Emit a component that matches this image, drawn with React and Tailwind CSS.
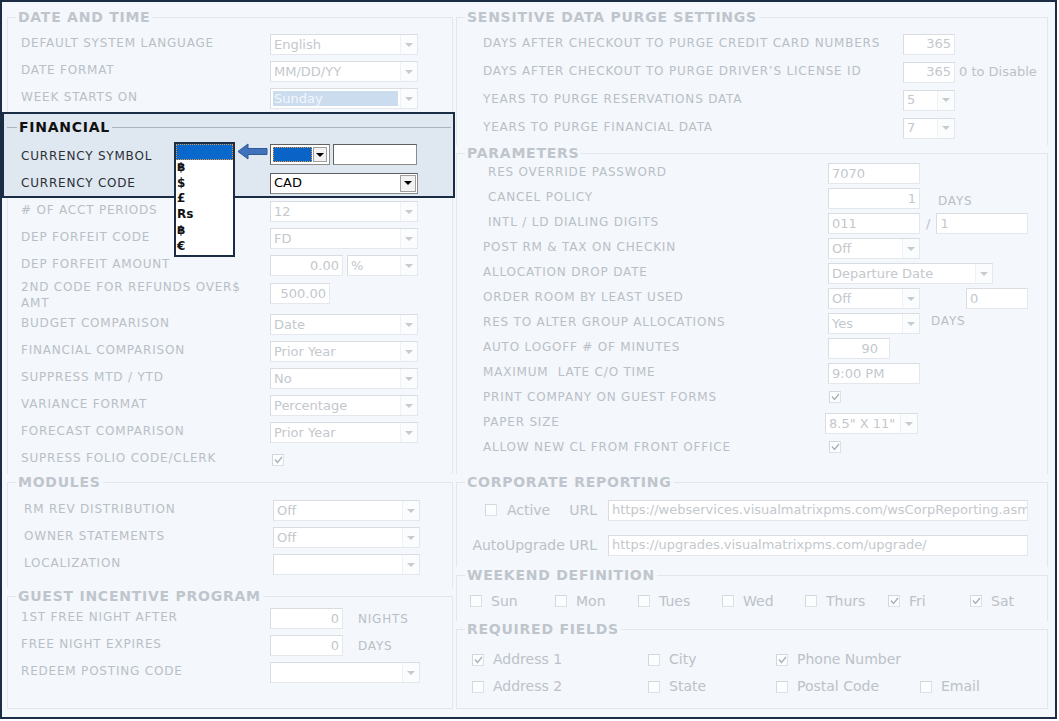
import React from "react";

const LABEL = "text-[12px] tracking-[0.8px] text-[#b9bfc7] whitespace-nowrap";
const DARK_LABEL = "text-[12px] tracking-[0.8px] text-[#2b2f36] whitespace-nowrap";
const FAINT = "text-[#bcc2c9]";

function Tri({ dark }) {
  return (
    <span
      className={`w-0 h-0 border-x-[4px] border-x-transparent border-t-[4px] ${
        dark ? "border-t-black" : "border-t-[#c6cbd0]"
      }`}
    />
  );
}

function Select({ value = "", w = "w-[148px]", hl }) {
  return (
    <div className={`${w} h-[21px] flex bg-white border border-[#e4e7eb] border-t-[#d9dde2] border-l-[#d9dde2]`}>
      <div className="flex-1 min-w-0 flex p-[2px]">
        <span
          className={`w-full flex items-center px-[1px] text-[13px] overflow-hidden whitespace-nowrap ${
            hl ? "bg-[#cbdcef] text-[#f3f7fb]" : "text-[#c3c8cd]"
          }`}
        >
          {value}
        </span>
      </div>
      <div className="w-[17px] flex items-center justify-center bg-[#fbfcfd] border-l border-[#eff1f3]">
        <Tri />
      </div>
    </div>
  );
}

function Input({ value = "", w = "w-[92px]", right, extra = "" }) {
  return (
    <div
      className={`${w} h-[21px] bg-white border border-[#e4e7eb] border-t-[#d9dde2] border-l-[#d9dde2] flex items-center px-[3px] text-[13px] text-[#c3c8cd] overflow-hidden whitespace-nowrap ${
        right ? "justify-end" : ""
      } ${extra}`}
    >
      {value}
    </div>
  );
}

function Check({ on }) {
  return (
    <span className="w-[12px] h-[12px] border border-[#dde1e6] border-t-[#d3d8dd] border-l-[#d3d8dd] bg-[#fcfdfe] flex items-center justify-center shrink-0">
      {on && (
        <svg width="9" height="8" viewBox="0 0 9 8">
          <path d="M1 3.5 L3.5 6.5 L8 1" stroke="#a9afb6" strokeWidth="1.3" fill="none" />
        </svg>
      )}
    </span>
  );
}

function CheckItem({ on, label }) {
  return (
    <div className="flex items-center gap-[9px]">
      <Check on={on} />
      <span className={`text-[14px] ${FAINT} whitespace-nowrap`}>{label}</span>
    </div>
  );
}

// padding goes on the inner wrapper so the legend keeps its place on the line
function Fieldset({ title, className = "", inner = "", children }) {
  return (
    <fieldset className={`border border-[#e2e7ed] ${className}`}>
      <legend className="ml-[8px] px-[2px] text-[14px] leading-[16px] tracking-[0.75px] font-bold text-[#bfc5cc] whitespace-nowrap">
        {title}
      </legend>
      <div className={inner}>{children}</div>
    </fieldset>
  );
}

// left column row: label col 249px wide
function LRow({ label, children, h = "h-[27px]", dark, lab = "pb-[4px]" }) {
  return (
    <div className={`${h} grid grid-cols-[249px_1fr] items-center`}>
      <span className={`${dark ? DARK_LABEL : LABEL} ${lab}`}>{label}</span>
      <div className="flex items-center">{children}</div>
    </div>
  );
}

function RRow({ label, children, cols, h, indent }) {
  return (
    <div className={`${h} grid ${cols} items-center`}>
      <span className={`${LABEL} whitespace-pre pb-[3px] ${indent ? "pl-[5px]" : ""}`}>{label}</span>
      <div className="flex items-center">{children}</div>
    </div>
  );
}

function LeftColumn() {
  return (
    <div className="w-[453px] shrink-0 pl-[5px] pt-[7px] flex flex-col">
      {/* DATE AND TIME */}
      <Fieldset title="DATE AND TIME" className="w-[446px] border-b-0" inner="pl-[13px] pt-[6px]">
        <LRow label="DEFAULT SYSTEM LANGUAGE">
          <Select value="English" />
        </LRow>
        <LRow label="DATE FORMAT">
          <Select value="MM/DD/YY" />
        </LRow>
        <LRow label="WEEK STARTS ON">
          <Select value="Sunday" hl />
        </LRow>
      </Fieldset>

      {/* FINANCIAL highlight */}
      <div className="-ml-[5px] w-[453px] h-[86px] border-2 border-[#1b2d45] bg-[#dfe7f0] flex flex-col">
        <div className="h-[27px] flex items-center">
          <span className="w-[10px] h-px bg-[#aab4c0] ml-[3px]" />
          <span className="px-[2px] text-[14px] tracking-[0.75px] font-bold text-[#111]">FINANCIAL</span>
          <span className="flex-1 h-px bg-[#aab4c0] mr-[2px]" />
        </div>
        <div className="pl-[17px]">
          <LRow label="CURRENCY SYMBOL" dark lab="pt-[3px]">
            <div className="flex items-center gap-[3px]">
              <div className="w-[60px] h-[21px] flex bg-white border border-[#8c8c8c] border-t-[#5f5f5f] border-l-[#5f5f5f] p-[2px] gap-[1px]">
                <div className="flex-1 bg-[#0a64c8] border border-dotted border-[#e0953f]" />
                <div className="w-[14px] flex items-center justify-center border border-[#a0a0a0] bg-[#f2f2f2]">
                  <Tri dark />
                </div>
              </div>
              <div className="w-[84px] h-[21px] bg-white border border-[#8c8c8c] border-t-[#5f5f5f] border-l-[#5f5f5f]" />
            </div>
          </LRow>
          <LRow label="CURRENCY CODE" dark h="h-[28px]" lab="pt-[1px]">
            <div className="w-[148px] h-[21px] mt-[2px] flex bg-white border border-[#8c8c8c] border-t-[#5f5f5f] border-l-[#5f5f5f]">
              <span className="flex-1 flex items-center px-[3px] text-[13px] text-black">CAD</span>
              <div className="w-[16px] m-[1px] flex items-center justify-center border border-[#a0a0a0] bg-[#f2f2f2]">
                <Tri dark />
              </div>
            </div>
          </LRow>
        </div>
      </div>

      {/* rest of FINANCIAL */}
      <div className="w-[446px] h-[276px] border-x border-[#e2e7ed] pl-[13px]">
        <LRow label="# OF ACCT PERIODS">
          <Select value="12" />
        </LRow>
        <LRow label="DEP FORFEIT CODE">
          <Select value="FD" />
        </LRow>
        <LRow label="DEP FORFEIT AMOUNT">
          <div className="flex gap-[4px]">
            <Input value="0.00" w="w-[73px]" right />
            <Select value="%" w="w-[71px]" />
          </div>
        </LRow>
        <div className="h-[32px] grid grid-cols-[249px_1fr] items-start">
          <span className={`${LABEL} leading-[16px]`}>
            2ND CODE FOR REFUNDS OVER$
            <br />
            AMT
          </span>
          <div className="pt-[4px]">
            <Input value="500.00" w="w-[60px]" right />
          </div>
        </div>
        <LRow label="BUDGET COMPARISON">
          <Select value="Date" />
        </LRow>
        <LRow label="FINANCIAL COMPARISON">
          <Select value="Prior Year" />
        </LRow>
        <LRow label="SUPPRESS MTD / YTD">
          <Select value="No" />
        </LRow>
        <LRow label="VARIANCE FORMAT">
          <Select value="Percentage" />
        </LRow>
        <LRow label="FORECAST COMPARISON">
          <Select value="Prior Year" />
        </LRow>
        <LRow label="SUPRESS FOLIO CODE/CLERK">
          <span className="ml-[2px]">
            <Check on />
          </span>
        </LRow>
      </div>

      {/* MODULES */}
      <Fieldset title="MODULES" className="w-[446px] border-b-0" inner="pl-[16px] pt-[7px] pb-[10px]">
        <LRow label="RM REV DISTRIBUTION">
          <Select value="Off" w="w-[147px]" />
        </LRow>
        <LRow label="OWNER STATEMENTS">
          <Select value="Off" w="w-[147px]" />
        </LRow>
        <LRow label="LOCALIZATION">
          <Select value="" w="w-[147px]" />
        </LRow>
      </Fieldset>

      {/* GUEST INCENTIVE PROGRAM */}
      <Fieldset title="GUEST INCENTIVE PROGRAM" className="w-[446px]" inner="pl-[13px] pt-[1px] pb-[22px]">
        <LRow label="1ST FREE NIGHT AFTER">
          <Input value="0" w="w-[73px]" right />
          <span className={`ml-[15px] ${LABEL}`}>NIGHTS</span>
        </LRow>
        <LRow label="FREE NIGHT EXPIRES">
          <Input value="0" w="w-[73px]" right />
          <span className={`ml-[15px] ${LABEL}`}>DAYS</span>
        </LRow>
        <LRow label="REDEEM POSTING CODE">
          <Select value="" w="w-[150px]" />
        </LRow>
      </Fieldset>
    </div>
  );
}

function RightColumn() {
  const s1 = "grid-cols-[420px_1fr]";
  const p = "grid-cols-[345px_1fr]";
  return (
    <div className="flex-1 pl-[1px] pt-[7px] flex flex-col">
      <Fieldset title="SENSITIVE DATA PURGE SETTINGS" className="w-[592px] border-b-0" inner="pl-[26px] pt-[5px] pb-[3px]">
        <RRow label="DAYS AFTER CHECKOUT TO PURGE CREDIT CARD NUMBERS" cols={s1} h="h-[28px]">
          <Input value="365" w="w-[52px]" right />
        </RRow>
        <RRow label="DAYS AFTER CHECKOUT TO PURGE DRIVER’S LICENSE ID" cols={s1} h="h-[28px]">
          <Input value="365" w="w-[52px]" right />
          <span className={`ml-[4px] text-[13px] ${FAINT} whitespace-nowrap`}>0 to Disable</span>
        </RRow>
        <RRow label="YEARS TO PURGE RESERVATIONS DATA" cols={s1} h="h-[28px]">
          <Select value="5" w="w-[52px]" />
        </RRow>
        <RRow label="YEARS TO PURGE FINANCIAL DATA" cols={s1} h="h-[28px]">
          <Select value="7" w="w-[52px]" />
        </RRow>
      </Fieldset>

      <Fieldset title="PARAMETERS" className="w-[592px] border-b-0" inner="pl-[26px] pb-[13px]">
        <RRow label="RES OVERRIDE PASSWORD" cols={p} h="h-[25px]" indent>
          <Input value="7070" />
        </RRow>
        <RRow label="CANCEL POLICY" cols={p} h="h-[25px]" indent>
          <Input value="1" right />
          <span className={`ml-[18px] ${LABEL} pt-[4px]`}>DAYS</span>
        </RRow>
        <RRow label="INTL / LD DIALING DIGITS" cols={p} h="h-[25px]" indent>
          <Input value="011" />
          <span className={`mx-[6px] text-[13px] ${FAINT}`}>/</span>
          <Input value="1" />
        </RRow>
        <RRow label="POST RM & TAX ON CHECKIN" cols={p} h="h-[25px]">
          <Select value="Off" w="w-[92px]" />
        </RRow>
        <RRow label="ALLOCATION DROP DATE" cols={p} h="h-[25px]">
          <Select value="Departure Date" w="w-[165px]" />
        </RRow>
        <RRow label="ORDER ROOM BY LEAST USED" cols={p} h="h-[25px]">
          <Select value="Off" w="w-[92px]" />
          <Input value="0" w="w-[62px]" extra="ml-[46px]" />
        </RRow>
        <RRow label="RES TO ALTER GROUP ALLOCATIONS" cols={p} h="h-[25px]">
          <Select value="Yes" w="w-[92px]" />
          <span className={`ml-[11px] ${LABEL} pb-[6px]`}>DAYS</span>
        </RRow>
        <RRow label="AUTO LOGOFF # OF MINUTES" cols={p} h="h-[25px]">
          <Input value="90" w="w-[62px]" right extra="pr-[11px]" />
        </RRow>
        <RRow label="MAXIMUM  LATE C/O TIME" cols={p} h="h-[25px]">
          <Input value="9:00 PM" />
        </RRow>
        <RRow label="PRINT COMPANY ON GUEST FORMS" cols={p} h="h-[25px]">
          <span className="ml-[1px] pb-[3px]">
            <Check on />
          </span>
        </RRow>
        <RRow label="PAPER SIZE" cols={p} h="h-[25px]">
          <div className="-ml-[3px]">
            <Select value={'8.5" X 11"'} w="w-[93px]" />
          </div>
        </RRow>
        <RRow label="ALLOW NEW CL FROM FRONT OFFICE" cols={p} h="h-[25px]">
          <span className="ml-[1px] pb-[3px]">
            <Check on />
          </span>
        </RRow>
      </Fieldset>

      <Fieldset title="CORPORATE REPORTING" className="w-[592px] border-b-0" inner="pl-[2px] pt-[7px] pb-[9px]">
        <div className="h-[26px] flex items-center">
          <div className="w-[149px] pr-[11px] flex items-center justify-end">
            <Check />
            <span className={`ml-[10px] text-[14px] ${FAINT}`}>Active</span>
            <span className={`ml-[19px] text-[14px] ${FAINT}`}>URL</span>
          </div>
          <Input value="https://webservices.visualmatrixpms.com/wsCorpReporting.asmx" w="w-[420px]" />
        </div>
        <div className="h-[26px] mt-[9px] flex items-center">
          <div className="w-[149px] pr-[11px] flex items-center justify-end">
            <span className={`text-[14px] ${FAINT} whitespace-nowrap`}>AutoUpgrade URL</span>
          </div>
          <Input value="https://upgrades.visualmatrixpms.com/upgrade/" w="w-[420px]" />
        </div>
      </Fieldset>

      <Fieldset title="WEEKEND DEFINITION" className="w-[592px] border-b-0" inner="pl-[13px] pt-[6px] pb-[8px]">
        <div className="h-[24px] grid grid-cols-[85px_83px_84px_83px_83px_82px_1fr] items-center">
          <CheckItem label="Sun" />
          <CheckItem label="Mon" />
          <CheckItem label="Tues" />
          <CheckItem label="Wed" />
          <CheckItem label="Thurs" />
          <CheckItem label="Fri" on />
          <CheckItem label="Sat" on />
        </div>
      </Fieldset>

      <Fieldset title="REQUIRED FIELDS" className="w-[592px]" inner="pl-[15px] pt-[9px] pb-[8px]">
        <div className="h-[27px] grid grid-cols-[176px_128px_144px_1fr] items-center">
          <CheckItem label="Address 1" on />
          <CheckItem label="City" />
          <CheckItem label="Phone Number" on />
          <span />
        </div>
        <div className="h-[27px] grid grid-cols-[176px_128px_144px_1fr] items-center">
          <CheckItem label="Address 2" />
          <CheckItem label="State" />
          <CheckItem label="Postal Code" />
          <CheckItem label="Email" />
        </div>
      </Fieldset>
    </div>
  );
}

export default function App() {
  const symbols = ["฿", "$", "£", "Rs", "฿", "€"];
  return (
    <div className="relative w-[1059px] h-[721px] bg-white font-['DejaVu_Sans',Verdana,sans-serif] overflow-hidden">
      <div className="w-[1057px] h-[719px] border-2 border-[#1b2d45] bg-[#f4f7fb] flex">
        <LeftColumn />
        <RightColumn />
      </div>

      {/* open currency symbol list */}
      <div className="absolute left-[174px] top-[142px] w-[61px] h-[115px] border-2 border-[#1b2d45] bg-white flex flex-col">
        <div className="h-[16px] bg-[#0a67cc] border border-dotted border-[#e0953f]" />
        {symbols.map((s, i) => (
          <span key={i} className="pl-[1px] text-[12px] leading-[15.7px] font-semibold text-[#111]">
            {s}
          </span>
        ))}
      </div>

      {/* arrow pointing at the list */}
      <svg className="absolute left-[237px] top-[143px]" width="32" height="17" viewBox="0 0 32 17">
        <polygon
          points="1,8.5 11,1 11,5.5 30,5.5 30,11.5 11,11.5 11,16"
          fill="#3f72ba"
          stroke="#2d5a98"
          strokeWidth="1"
        />
      </svg>
    </div>
  );
}
